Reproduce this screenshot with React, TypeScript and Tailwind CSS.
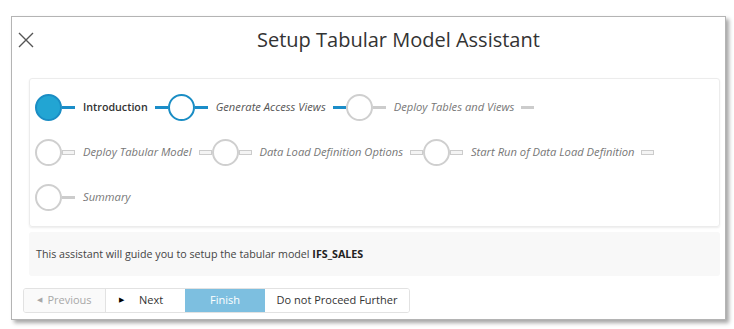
import React from 'react';

type StepState = 'done' | 'current' | 'todo';

interface Step {
  label: string;
  state: StepState;
  lineIn: 'blue' | 'gray' | 'double';
  lineOut?: 'blue' | 'gray' | 'double';
}

const STEPS: Step[] = [
  { label: 'Introduction', state: 'done', lineIn: 'blue', lineOut: 'blue' },
  { label: 'Generate Access Views', state: 'current', lineIn: 'blue', lineOut: 'blue' },
  { label: 'Deploy Tables and Views', state: 'todo', lineIn: 'gray', lineOut: 'gray' },
  { label: 'Deploy Tabular Model', state: 'todo', lineIn: 'double', lineOut: 'double' },
  { label: 'Data Load Definition Options', state: 'todo', lineIn: 'double', lineOut: 'double' },
  { label: 'Start Run of Data Load Definition', state: 'todo', lineIn: 'double', lineOut: 'double' },
  { label: 'Summary', state: 'todo', lineIn: 'gray' },
];

const Line = ({ kind }: { kind: 'blue' | 'gray' | 'double' }) => {
  if (kind === 'blue') return <div className="w-[13px] h-[3px] bg-[#1b8dc8] shrink-0" />;
  if (kind === 'gray') return <div className="w-[13px] h-[3px] bg-[#cccccc] shrink-0" />;
  return <div className="w-[13px] h-[5px] border border-[#cccccc] bg-[#f4f4f4] shrink-0" />;
};

const Circle = ({ state }: { state: StepState }) => {
  if (state === 'done')
    return <div className="w-[27px] h-[27px] rounded-full bg-[#22a5d3] border-2 border-[#1a8dc4] shrink-0" />;
  if (state === 'current')
    return <div className="w-[27px] h-[27px] rounded-full bg-white border-2 border-[#1a8dc4] shrink-0" />;
  return <div className="w-[27px] h-[27px] rounded-full bg-white border-2 border-[#cfcfcf] shrink-0" />;
};

export default function App() {
  return (
    <div className="w-[734px] h-[329px] bg-white relative" style={{ fontFamily: '"Open Sans", sans-serif' }}>
      <div className="absolute left-[11px] top-[16px] w-[715px] h-[304px] bg-white border border-[#b4b4b4] shadow-[3px_3px_4px_rgba(0,0,0,0.35)] flex flex-col">
        {/* Header */}
        <div className="flex items-center h-[45px] pt-[1px]">
          <button className="ml-[6px] w-[16px] h-[16px] flex items-center justify-center text-[#555]">
            <svg width="16" height="16" viewBox="0 0 16 16">
              <path d="M1 1 L15 15 M15 1 L1 15" stroke="#555" strokeWidth="1.4" fill="none" />
            </svg>
          </button>
          <h1 className="ml-[223px] text-[20px] leading-none text-[#333] font-normal">
            Setup Tabular Model Assistant
          </h1>
        </div>

        {/* Steps card */}
        <div className="ml-[17px] mr-[5px] mt-[16px] h-[149px] rounded-[3px] border border-[#ececec] shadow-[0_1px_2px_rgba(0,0,0,0.08)] pl-[5px] pr-[20px] pt-[15px]">
          <div className="flex flex-wrap gap-y-[18px]">
            {STEPS.map((s, i) => (
              <div key={s.label} className="flex items-center h-[27px]">
                <Circle state={s.state} />
                <Line kind={s.lineIn} />
                <span
                  className={`ml-[8px] whitespace-nowrap ${
                    s.state === 'done'
                      ? 'text-[10.7px] font-semibold text-[#333]'
                      : s.state === 'current'
                      ? 'text-[11.2px] italic text-[#555]'
                      : 'text-[11.2px] italic text-[#777]'
                  }`}
                >
                  {s.label}
                </span>
                {s.lineOut && i < STEPS.length - 1 && (
                  <div className="ml-[7px]">
                    <Line kind={s.lineOut} />
                  </div>
                )}
              </div>
            ))}
          </div>
        </div>

        {/* Info */}
        <div className="ml-[17px] mr-[5px] mt-[5px] h-[44px] rounded-[3px] bg-[#f8f8f8] flex items-center pl-[7px] text-[10.7px] text-[#444]">
          This assistant will guide you to setup the tabular model&nbsp;<b className="text-[#222] font-bold">IFS_SALES</b>
        </div>

        {/* Buttons */}
        <div className="ml-[11px] mt-[12px] flex h-[25px] w-[387px] rounded-[3px] border border-[#e2e2e2] overflow-hidden text-[11px]">
          <button className="w-[81px] bg-[#fafafa] text-[#a8a8a8] flex items-center justify-center gap-[5px]">
            <span className="text-[7px]">◀</span>
            <span>Previous</span>
          </button>
          <button className="w-[80px] bg-white border-l border-[#e2e2e2] text-[#333] flex items-center pl-[13px]">
            <span className="text-[7px] text-black">▶</span>
            <span className="ml-[15px]">Next</span>
          </button>
          <button className="w-[80px] bg-[#7dbfe0] text-white flex items-center justify-center">Finish</button>
          <button className="flex-1 bg-white text-[#333] flex items-center justify-center">Do not Proceed Further</button>
        </div>
      </div>
    </div>
  );
}
